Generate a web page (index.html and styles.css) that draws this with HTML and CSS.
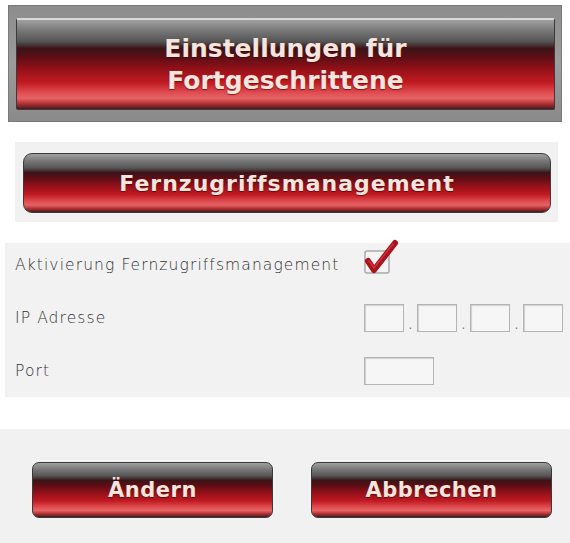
FILE: index.html
```html
<!DOCTYPE html>
<html lang="de">
<head>
    <meta charset="UTF-8">
    <meta name="viewport" content="width=device-width, initial-scale=1.0">
    <title>Einstellungen für Fortgeschrittene</title>
    <link rel="stylesheet" href="styles.css">
</head>
<body>
    <!-- Kopfzeile -->
    <div class="banner">
        <div class="redBar bannerBar">
            <span>Einstellungen für<br>Fortgeschrittene</span>
        </div>
    </div>

    <!-- Abschnittstitel -->
    <div class="sectionBox">
        <div class="redBar sectionBar">
            <span>Fernzugriffsmanagement</span>
        </div>
    </div>

    <!-- Formular -->
    <div class="formBox">
        <div class="formRow">
            <label class="formLabel">Aktivierung Fernzugriffsmanagement</label>
            <span class="checkBox">
                <svg width="36" height="36" viewBox="0 0 36 36">
                    <rect x="1" y="12" width="24" height="22" rx="2" fill="#f4f4f4" stroke="#a9a9a9" stroke-width="1.5"/>
                    <path d="M4 22 L10 31 L31 4" fill="none" stroke="#a8141e" stroke-width="6" stroke-linecap="round" stroke-linejoin="round"/>
                    <path d="M5 22 L10 29 L29 5" fill="none" stroke="#d03038" stroke-width="1.5" stroke-linecap="round"/>
                </svg>
            </span>
        </div>
        <div class="formRow">
            <label class="formLabel">IP Adresse</label>
            <div class="ipFields">
                <input class="textField ipField" type="text">
                <span class="dot">.</span>
                <input class="textField ipField" type="text">
                <span class="dot">.</span>
                <input class="textField ipField" type="text">
                <span class="dot">.</span>
                <input class="textField ipField" type="text">
            </div>
        </div>
        <div class="formRow">
            <label class="formLabel">Port</label>
            <input class="textField portField" type="text">
        </div>
    </div>

    <!-- Schaltflächen -->
    <div class="buttonBox">
        <button class="redBar actionButton">Ändern</button>
        <button class="redBar actionButton">Abbrechen</button>
    </div>
</body>
</html>
```

FILE: styles.css
```css
body {
    margin: 0;
    background-color: #ffffff;
    font-family: "DejaVu Sans", sans-serif;
}

/* roter Glanzbalken */
.redBar {
    display: flex;
    align-items: center;
    justify-content: center;
    box-sizing: border-box;
    color: #f6e4de;
    font-family: "DejaVu Sans", sans-serif;
    font-weight: bold;
    text-align: center;
    text-shadow: 0 1px 1px rgba(60, 0, 0, 0.6);
    background: linear-gradient(to bottom,
        #a0a0a0 0%,
        #777777 12%,
        #555555 24%,
        #3a1418 32%,
        #5e0e15 42%,
        #961119 56%,
        #c01a22 70%,
        #e04e52 82%,
        #e66464 88%,
        #b03034 94%,
        #4a1a1c 100%);
    border: 1px solid #3a3a3a;
}

.banner {
    margin: 5px 8px 0 8px;
    height: 117px;
    box-sizing: border-box;
    padding: 12px 6px 11px 7px;
    background: linear-gradient(to bottom, #8c8c8c, #9c9c9c 50%, #8a8a8a);
    border: 1px solid #7a7a7a;
}

.bannerBar {
    height: 100%;
    font-size: 25px;
    line-height: 32px;
    border-top: 2px solid #d8d8d8;
    border-radius: 2px;
}

.sectionBox {
    margin: 20px 12px 0 15px;
    height: 80px;
    box-sizing: border-box;
    padding: 11px 7px 9px 8px;
    background-color: #f1f1f1;
}

.sectionBar {
    height: 100%;
    font-size: 22px;
    letter-spacing: 1px;
    border-radius: 9px;
}

.formBox {
    display: flex;
    flex-direction: column;
    gap: 9px;
    margin: 21px 0 0 5px;
    height: 154px;
    box-sizing: border-box;
    padding: 0 0 0 10px;
    background-color: #f2f2f2;
}

.formRow {
    display: flex;
    align-items: center;
    height: 44px;
}

.formLabel {
    width: 349px;
    font-size: 15.5px;
    font-weight: 200;
    letter-spacing: 1.1px;
    color: #333333;
}

.checkBox {
    display: block;
    height: 36px;
    margin-top: -16px;
}

.ipFields {
    display: flex;
    align-items: flex-end;
}

.textField {
    box-sizing: border-box;
    height: 28px;
    margin: 0;
    background-color: #f6f6f6;
    border: 1px solid #b4b4b4;
    box-shadow: inset 1px 1px 1px #d0d0d0;
}

.ipField {
    width: 40px;
}

.dot {
    width: 13px;
    text-align: center;
    font-size: 12px;
    line-height: 14px;
    color: #777;
}

.portField {
    width: 70px;
}

.buttonBox {
    display: flex;
    gap: 38px;
    margin-top: 32px;
    height: 114px;
    box-sizing: border-box;
    padding: 33px 0 0 32px;
    background-color: #f1f1f1;
}

.actionButton {
    width: 241px;
    height: 56px;
    padding: 0;
    font-size: 21px;
    letter-spacing: 0.5px;
    border-radius: 7px;
    cursor: pointer;
}
```
